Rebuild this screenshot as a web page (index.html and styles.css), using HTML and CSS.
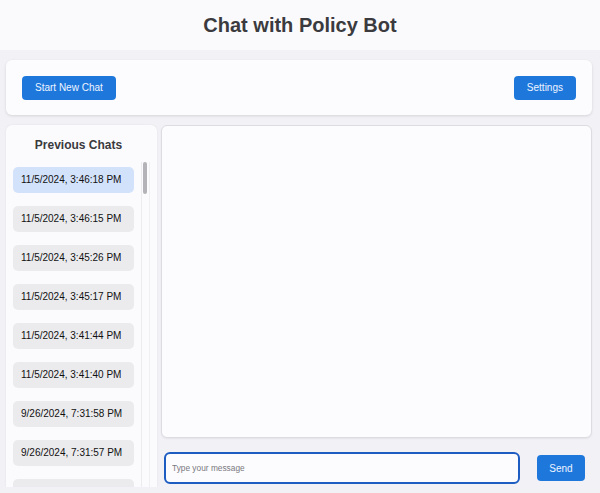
FILE: index.html
```html
<!DOCTYPE html>
<html lang="en">
<head>
<meta charset="utf-8">
<title>Chat with Policy Bot</title>
<link rel="stylesheet" href="styles.css">
</head>
<body>
<div class="app">
  <header class="page-header">
    <h1 class="page-title">Chat with Policy Bot</h1>
  </header>
  <main class="main">
    <div class="toolbar">
      <button class="btn">Start New Chat</button>
      <button class="btn">Settings</button>
    </div>
    <div class="content">
      <aside class="sidebar">
        <h2 class="sidebar-title">Previous Chats</h2>
        <div class="list-wrap">
          <ul class="chat-list">
            <li class="chat-item active">11/5/2024, 3:46:18 PM</li>
            <li class="chat-item">11/5/2024, 3:46:15 PM</li>
            <li class="chat-item">11/5/2024, 3:45:26 PM</li>
            <li class="chat-item">11/5/2024, 3:45:17 PM</li>
            <li class="chat-item">11/5/2024, 3:41:44 PM</li>
            <li class="chat-item">11/5/2024, 3:41:40 PM</li>
            <li class="chat-item">9/26/2024, 7:31:58 PM</li>
            <li class="chat-item">9/26/2024, 7:31:57 PM</li>
            <li class="chat-item chat-item-clipped"></li>
          </ul>
          <div class="scrollbar"><div class="scrollbar-thumb"></div></div>
        </div>
      </aside>
      <section class="chat">
        <div class="messages"></div>
        <div class="composer">
          <input class="message-input" type="text" placeholder="Type your message">
          <button class="btn btn-send">Send</button>
        </div>
      </section>
    </div>
  </main>
</div>
</body>
</html>
```

FILE: styles.css
```css
* {
  box-sizing: border-box;
}

html, body {
  margin: 0;
  padding: 0;
}

body {
  background: #f2f2f6;
  font-family: "Liberation Sans", Arial, sans-serif;
  color: #222;
  overflow: hidden;
}

.app {
  display: flex;
  flex-direction: column;
  height: 487px;
}

.page-header {
  background: #fafafc;
  height: 50px;
  flex: none;
}

.page-title {
  margin: 0;
  font-size: 20px;
  line-height: 50px;
  font-weight: bold;
  text-align: center;
  color: #3b3b3f;
}

.main {
  flex: 1;
  min-height: 0;
  display: flex;
  flex-direction: column;
  gap: 10px;
  padding: 10px 8px 0 6px;
}

.toolbar {
  flex: none;
  height: 55px;
  background: #fcfcfe;
  border-radius: 6px;
  box-shadow: 0 1px 3px rgba(0, 0, 0, 0.12);
  display: flex;
  align-items: center;
  justify-content: space-between;
  padding: 0 16px;
}

.btn {
  font-family: "Liberation Sans", Arial, sans-serif;
  font-size: 10px;
  height: 24px;
  padding: 0 13px;
  border: none;
  border-radius: 4px;
  background: #1e78dc;
  color: #eef4ff;
  cursor: pointer;
}

.content {
  flex: 1;
  min-height: 0;
  display: flex;
  gap: 4px;
}

.sidebar {
  width: 151px;
  flex: none;
  background: #fbfbfd;
  border-radius: 6px 6px 0 0;
  box-shadow: 0 0 2px rgba(0, 0, 0, 0.08);
  display: flex;
  flex-direction: column;
  padding: 0 7px 0 1px;
}

.sidebar-title {
  margin: 0;
  height: 37px;
  padding-top: 4px;
  line-height: 33px;
  font-size: 12px;
  font-weight: bold;
  color: #3a3a3e;
  text-align: center;
  flex: none;
}

.list-wrap {
  flex: 1;
  min-height: 0;
  display: flex;
}

.chat-list {
  list-style: none;
  margin: 0;
  padding: 5px 7px 0 6px;
  flex: 1;
  min-width: 0;
  overflow: hidden;
}

.scrollbar {
  width: 9px;
  flex: none;
  background: #fbfbfd;
  border-left: 1px solid #ececf0;
  border-right: 1px solid #f0f0f3;
  padding: 0 2px 0 1px;
}

.scrollbar-thumb {
  height: 32px;
  background: #b4b4b8;
  border-radius: 3px;
}

.chat-item {
  height: 26px;
  line-height: 26px;
  margin-bottom: 13px;
  padding-left: 8px;
  border-radius: 5px;
  background: #ebebee;
  font-size: 10px;
  color: #111;
  white-space: nowrap;
}

.chat-item.active {
  background: #d3e2fb;
}

.chat {
  flex: 1;
  min-width: 0;
  display: flex;
  flex-direction: column;
}

.messages {
  flex: 1;
  background: #fcfcfe;
  border: 1px solid #dcdce1;
  border-radius: 6px;
  box-shadow: 0 1px 2px rgba(0, 0, 0, 0.06);
}

.composer {
  flex: none;
  display: flex;
  align-items: center;
  padding: 14px 7px 3px 3px;
}

.message-input {
  width: 356px;
  height: 32px;
  border: 2px solid #1d5cc0;
  border-radius: 6px;
  background: #fcfcfe;
  padding: 0 6px;
  font-family: "Liberation Sans", Arial, sans-serif;
  font-size: 8.33px;
  outline: none;
}

.message-input::placeholder {
  color: #7a7a80;
}

.btn-send {
  margin-left: auto;
  height: 26px;
  width: 48px;
  padding: 0;
}
```
